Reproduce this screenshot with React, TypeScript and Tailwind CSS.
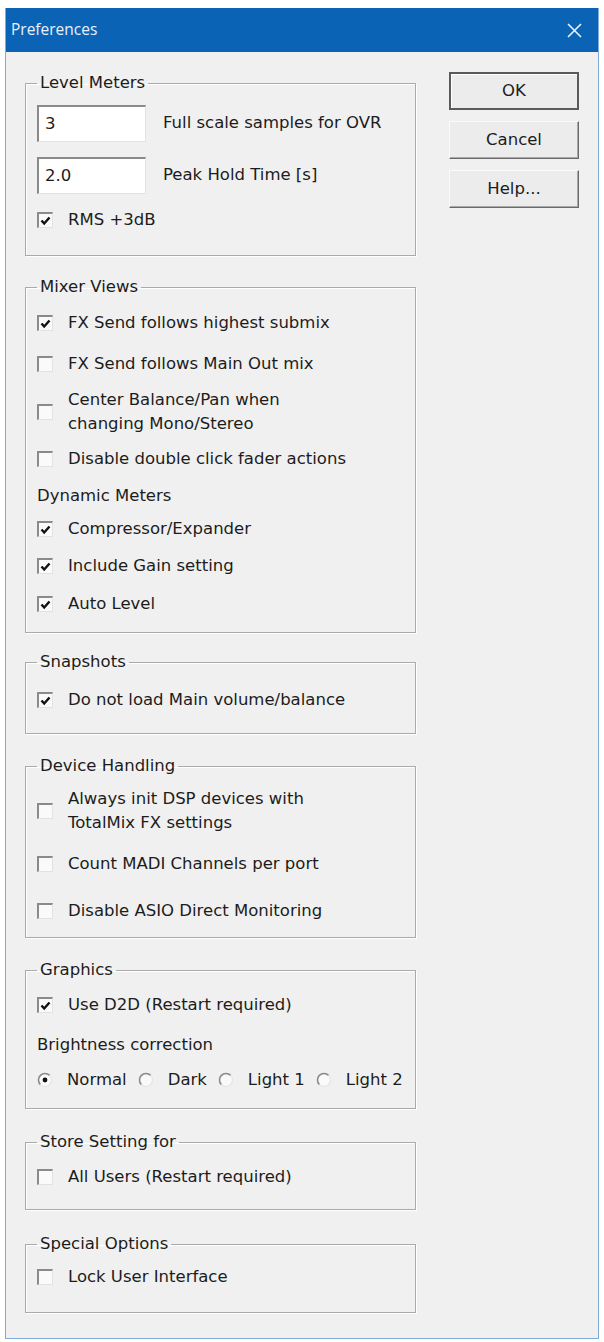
import React from 'react';

const ui = "font-['DejaVu_Sans',sans-serif] text-[16.5px] text-[#1c1c1c]";

function Box({ checked }: { checked?: boolean }) {
  return (
    <span className="w-[16px] h-[16px] shrink-0 bg-[#fafafa] border-t-2 border-l-2 border-t-[#8a8a8a] border-l-[#8a8a8a] border-b border-r border-b-[#e2e2e2] border-r-[#e2e2e2] flex items-center justify-center">
      {checked && (
        <svg width="11" height="10" viewBox="0 0 11 10">
          <path d="M1.5 4.5 L4.2 7.5 L9.5 1.5" fill="none" stroke="#111" strokeWidth="2.4" />
        </svg>
      )}
    </span>
  );
}

function Check({ checked, children }: { checked?: boolean; children: React.ReactNode }) {
  return (
    <div className="flex items-center gap-[15px] leading-[20px]">
      <Box checked={checked} />
      <span>{children}</span>
    </div>
  );
}

function Radio({ on, label }: { on?: boolean; label: string }) {
  return (
    <div className="flex items-center gap-[14px] leading-[20px]">
      <svg width="16" height="16" viewBox="0 0 16 16" className="shrink-0">
        <circle cx="8" cy="8" r="6.5" fill="#fafafa" />
        <path d="M3.4 12.6 A6.5 6.5 0 0 1 12.6 3.4" fill="none" stroke="#8a8a8a" strokeWidth="1.6" />
        <path d="M12.6 3.4 A6.5 6.5 0 0 1 3.4 12.6" fill="none" stroke="#e4e4e4" strokeWidth="1.2" />
        {on && <circle cx="8" cy="8" r="2.4" fill="#111" />}
      </svg>
      <span>{label}</span>
    </div>
  );
}

function Group({ title, className, children }: { title: string; className?: string; children: React.ReactNode }) {
  return (
    <fieldset className={`w-[391px] border border-[#aaaaaa] shadow-[inset_1px_1px_0_#ffffff,1px_1px_0_#ffffff] pl-[11px] ${className ?? ''}`}>
      <legend className="px-[3px] leading-[20px]">{title}</legend>
      {children}
    </fieldset>
  );
}

function Field({ value }: { value: string }) {
  return (
    <div className="w-[109px] h-[37px] bg-white border-t-2 border-l-2 border-t-[#8a8a8a] border-l-[#8a8a8a] border-b border-r border-b-[#e2e2e2] border-r-[#e2e2e2] pl-[6px] flex items-center">
      {value}
    </div>
  );
}

function Btn({ label, main }: { label: string; main?: boolean }) {
  return (
    <button
      className={`w-[130px] h-[38px] bg-[#ececec] flex items-center justify-center ${
        main
          ? 'border-2 border-[#5a5a5a] shadow-[inset_1px_1px_0_#ffffff]'
          : 'border border-t-[#fafafa] border-l-[#fafafa] border-b-[#6a6a6a] border-r-[#6a6a6a] shadow-[inset_-1px_-1px_0_#a8a8a8]'
      }`}
    >
      {label}
    </button>
  );
}

export default function App() {
  return (
    <div className={`bg-white w-[604px] h-[1342px] pt-[8px] pl-[5px] ${ui}`}>
      <div className="w-[594px] h-[1331px] flex flex-col border-x border-b border-[#7fa9d6] bg-[#f0f0f0]">
        <div className="h-[44px] bg-[#0b63b5] flex items-center justify-between pl-[5px] pr-[16px] shrink-0">
          <span className="font-['Open_Sans',sans-serif] text-[15.5px] text-[#e8f1fb]">Preferences</span>
          <svg width="15" height="15" viewBox="0 0 15 15">
            <path d="M1 1 L14 14 M14 1 L1 14" stroke="#eaf2fb" strokeWidth="1.6" />
          </svg>
        </div>

        <div className="flex pl-[19px] pt-[21px]">
          <div className="flex flex-col">
            <Group title="Level Meters" className="pb-[25px]">
              <div className="flex items-center gap-[17px] mt-[12px]">
                <Field value="3" />
                <span>Full scale samples for OVR</span>
              </div>
              <div className="flex items-center gap-[17px] mt-[15px]">
                <Field value="2.0" />
                <span>Peak Hold Time [s]</span>
              </div>
              <div className="mt-[16px]">
                <Check checked>RMS +3dB</Check>
              </div>
            </Group>

            <Group title="Mixer Views" className="mt-[21px] pb-[18px]">
              <div className="flex flex-col mt-[16px]">
                <Check checked>FX Send follows highest submix</Check>
                <div className="mt-[21px]">
                  <Check>FX Send follows Main Out mix</Check>
                </div>
                <div className="mt-[14px]">
                  <Check>
                    <span className="block leading-[24px]">
                      Center Balance/Pan when
                      <br />
                      changing Mono/Stereo
                    </span>
                  </Check>
                </div>
                <div className="mt-[13px]">
                  <Check>Disable double click fader actions</Check>
                </div>
                <div className="mt-[17px] leading-[20px]">Dynamic Meters</div>
                <div className="mt-[13px]">
                  <Check checked>Compressor/Expander</Check>
                </div>
                <div className="mt-[17px]">
                  <Check checked>Include Gain setting</Check>
                </div>
                <div className="mt-[18px]">
                  <Check checked>Auto Level</Check>
                </div>
              </div>
            </Group>

            <Group title="Snapshots" className="mt-[19px] pb-[23px]">
              <div className="mt-[18px]">
                <Check checked>Do not load Main volume/balance</Check>
              </div>
            </Group>

            <Group title="Device Handling" className="mt-[22px] pb-[16px]">
              <div className="mt-[11px]">
                <Check>
                  <span className="block leading-[24px]">
                    Always init DSP devices with
                    <br />
                    TotalMix FX settings
                  </span>
                </Check>
              </div>
              <div className="mt-[19px]">
                <Check>Count MADI Channels per port</Check>
              </div>
              <div className="mt-[27px]">
                <Check>Disable ASIO Direct Monitoring</Check>
              </div>
            </Group>

            <Group title="Graphics" className="mt-[22px] pb-[18px]">
              <div className="mt-[15px]">
                <Check checked>Use D2D (Restart required)</Check>
              </div>
              <div className="mt-[20px] leading-[20px]">Brightness correction</div>
              <div className="mt-[15px] flex items-center gap-[11px]">
                <Radio on label="Normal" />
                <Radio label="Dark" />
                <Radio label="Light 1" />
                <Radio label="Light 2" />
              </div>
            </Group>

            <Group title="Store Setting for" className="mt-[23px] pb-[22px]">
              <div className="mt-[15px]">
                <Check>All Users (Restart required)</Check>
              </div>
            </Group>

            <Group title="Special Options" className="mt-[24px] pb-[25px]">
              <div className="mt-[13px]">
                <Check>Lock User Interface</Check>
              </div>
            </Group>
          </div>

          <div className="flex flex-col gap-[11px] ml-[33px] mt-[-1px]">
            <Btn label="OK" main />
            <Btn label="Cancel" />
            <Btn label="Help..." />
          </div>
        </div>
      </div>
    </div>
  );
}
